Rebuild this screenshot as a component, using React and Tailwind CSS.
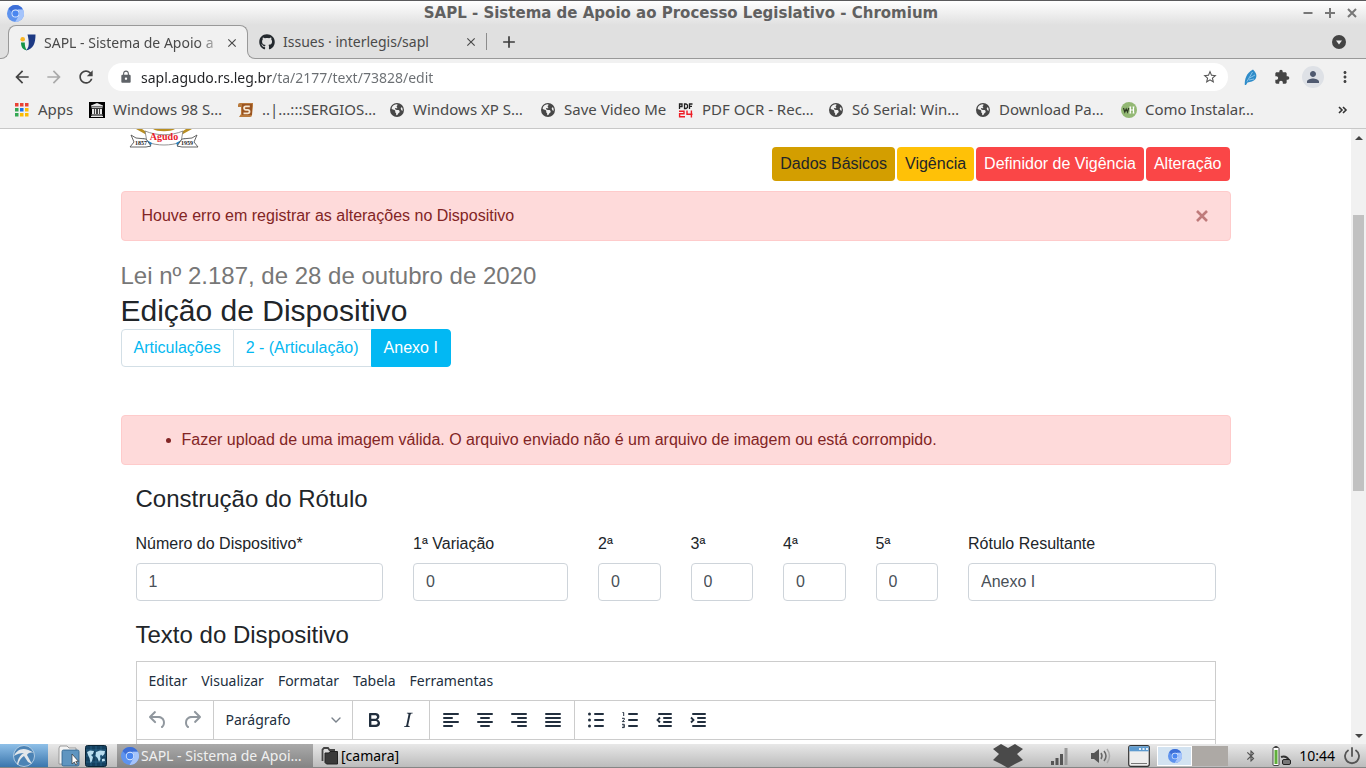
import React from "react";
import {
  MdArrowBack,
  MdArrowForward,
  MdRefresh,
  MdLock,
  MdStarOutline,
  MdExtension,
  MdPerson,
  MdMoreVert,
  MdClose,
  MdAdd,
  MdBluetooth,
} from "react-icons/md";
import { FaGithub, FaEarthAmericas } from "react-icons/fa6";

function ChromiumLogo({ className }) {
  return (
    <svg viewBox="0 0 24 24" className={className} aria-hidden="true">
      <circle cx="12" cy="12" r="12" fill="#5e93ee" />
      <path d="M12 0a12 12 0 0 1 10.6 6.4H12A5.6 5.6 0 0 0 6.7 10L2 5.4A12 12 0 0 1 12 0z" fill="#3d6fd8" />
      <path d="M22.6 6.4A12 12 0 0 1 11.4 24l5-8.6A5.6 5.6 0 0 0 15.5 7.5V6.4z" fill="#a5c4fb" />
      <circle cx="12" cy="12" r="5.6" fill="#dce8fd" />
      <circle cx="12" cy="12" r="4.4" fill="#4a86f0" />
    </svg>
  );
}

function SaplLogo() {
  return (
    <svg viewBox="0 0 16 17" className="h-[17px] w-4 shrink-0" aria-hidden="true">
      <circle cx="2.7" cy="5.2" r="2.3" fill="#f9b521" />
      <path d="M7.5 0.500H15.500C15.500 9 13.500 15 6 16.500 8.500 14 9 11 8.700 7.500 8.500 4.500 8 2.500 7.500.5z" fill="#1d3a84" />
      <path d="M1 8.500h3.800c0 3 .4 5.500 2 7.800C2.800 15.800 1 13 1 8.500z" fill="#159447" />
    </svg>
  );
}

function AppsIcon() {
  const colors = ["#ea4335", "#ea4335", "#ea4335", "#34a853", "#1a73e8", "#fbbc04", "#34a853", "#fbbc04", "#fbbc04"];
  return (
    <svg viewBox="0 0 14 14" className="size-[14px] shrink-0" aria-hidden="true">
      {colors.map((c, i) => (
        <rect key={i} x={(i % 3) * 5} y={Math.floor(i / 3) * 5} width="3.5" height="3.5" fill={c} />
      ))}
    </svg>
  );
}

function ArchiveIcon() {
  return (
    <svg viewBox="0 0 16 16" className="size-4 shrink-0" aria-hidden="true">
      <rect width="16" height="16" fill="#000" />
      <path d="M8 1l6 2.500v1H2v-1zM2.500 5.200h11v1h-11zM3 7h2v5H3zm2.700 0h1.600v5H5.700zm3 0h1.600v5H8.700zM11 7h2v5h-2zM2.500 12.600h11v.9h-11zM2 14h12v1H2z" fill="#e8e8e8" />
    </svg>
  );
}

function ScrollIcon() {
  return (
    <svg viewBox="0 0 16 16" className="size-4 shrink-0" aria-hidden="true">
      <path d="M0 3a2 2 0 0 1 2-2h13v3l-1 9a2 2 0 0 1-2 2H1l2-3V5H0z" fill="#b97a3c" />
      <path d="M4 2h10v11H4z" fill="#9a5420" />
      <path d="M11.800 4.300H7.800a1.700 1.700 0 0 0 0 3.500h2a1.700 1.700 0 0 1 0 3.500H5.500" fill="none" stroke="#f5e6d0" strokeWidth="1.800" />
    </svg>
  );
}

function GlobeIcon() {
  return <FaEarthAmericas className="ml-px size-[14px] shrink-0 text-[#474747]" aria-hidden="true" />;
}

function PdfIcon() {
  return (
    <svg viewBox="0 0 16 16" className="size-4 shrink-0" aria-hidden="true">
      <path d="M1.500 7V2H4v2.500H1.500M6.500 2h1.500l1.500 1v2.500l-1.500 1H6.500zM11.500 7V2h3M11.500 4.300h2.500" fill="none" stroke="#222" strokeWidth="1.300" />
      <path d="M1 9.300h5v2.500H1.600v2.900H7M9 8.500v3.700h5.500M13.400 8.500v7" fill="none" stroke="#ee1c25" strokeWidth="1.400" />
    </svg>
  );
}

function WikiHowIcon() {
  return (
    <svg viewBox="0 0 16 16" className="size-4 shrink-0" aria-hidden="true">
      <circle cx="8" cy="8" r="8" fill="#93b874" />
      <path d="M2.500 6l1.300 4L5.200 7l1.300 3L7.700 6" fill="none" stroke="#2c3a22" strokeWidth="1.200" />
      <path d="M9.300 5v6M12.500 5v6M9.300 8h3.200M8.400 5h1.800M8.400 11h1.800M11.600 5h1.800M11.600 11h1.800" fill="none" stroke="#fff" strokeWidth="1.200" />
    </svg>
  );
}

const bookmarks = [
  { icon: <ArchiveIcon />, label: "Windows 98 S…", width: "w-[149px]" },
  { icon: <ScrollIcon />, label: "..|...:::SERGIOS…", width: "w-[151px]" },
  { icon: <GlobeIcon />, label: "Windows XP S…", width: "w-[151px]" },
  { icon: <GlobeIcon />, label: "Save Video Me", width: "w-[138px]" },
  { icon: <PdfIcon />, label: "PDF OCR - Rec…", width: "w-[150px]" },
  { icon: <GlobeIcon />, label: "Só Serial: Win…", width: "w-[147px]" },
  { icon: <GlobeIcon />, label: "Download Pa…", width: "w-[146px]" },
  { icon: <WikiHowIcon />, label: "Como Instalar…", width: "w-[150px]" },
];

function TitleBar() {
  return (
    <header className="flex h-[25px] shrink-0 items-center border-t border-[#5a5a5c] bg-linear-to-b from-white to-[#e0e0e0] px-2">
      <ChromiumLogo className="-ml-px size-[17px]" />
      <h1 className="flex-1 pl-9 text-center font-['DejaVu_Sans',sans-serif] text-[15px] font-bold text-[#606060]">
        SAPL - Sistema de Apoio ao Processo Legislativo - Chromium
      </h1>
      <div className="flex items-center gap-[10px] text-[#777]">
        <button aria-label="Minimizar" className="flex size-3 items-center justify-center">
          <svg viewBox="0 0 12 12" className="size-3"><path d="M1.500 6h9" stroke="currentColor" strokeWidth="2" /></svg>
        </button>
        <button aria-label="Maximizar" className="flex size-3 items-center justify-center">
          <svg viewBox="0 0 12 12" className="size-3"><path d="M1 6h10M6 1v10" stroke="currentColor" strokeWidth="2" /></svg>
        </button>
        <button aria-label="Fechar janela" className="flex size-3 items-center justify-center">
          <svg viewBox="0 0 12 12" className="size-3"><path d="M2 2l8 8M10 2l-8 8" stroke="currentColor" strokeWidth="2" /></svg>
        </button>
      </div>
    </header>
  );
}

function TabStrip() {
  return (
    <nav aria-label="Abas" className="flex h-[34px] shrink-0 border-b border-[#999] bg-[#e0e0e0] pl-2 text-[14px] text-[#4a4a4a]">
      <div className="relative z-10 -mb-px flex w-[240px] items-center rounded-t-lg border border-b-0 border-[#999] bg-[#f1f1f1] pr-2 pl-[11px]">
        <span className="absolute bottom-0 -left-[9px] size-[9px] bg-[#f1f1f1]">
          <span className="block size-full rounded-br-lg border-r border-b border-[#999] bg-[#e0e0e0]" />
        </span>
        <span className="absolute -right-[9px] bottom-0 size-[9px] bg-[#f1f1f1]">
          <span className="block size-full rounded-bl-lg border-b border-l border-[#999] bg-[#e0e0e0]" />
        </span>
        <SaplLogo />
        <button className="ml-2 flex-1 mask-r-from-85% text-left whitespace-nowrap">SAPL - Sistema de Apoio a</button>
        <button aria-label="Fechar aba"><MdClose className="size-[14px]" /></button>
      </div>
      <div className="my-2 flex w-[239px] items-center border-r border-[#8c8c8c] pr-2 pl-[11px]">
        <FaGithub className="size-4 text-[#24292e]" />
        <button className="ml-2 flex-1 text-left whitespace-nowrap">Issues · interlegis/sapl</button>
        <button aria-label="Fechar aba"><MdClose className="size-[14px]" /></button>
      </div>
      <button aria-label="Nova aba" className="ml-3"><MdAdd className="size-5 text-[#3c3c3c]" /></button>
      <button aria-label="Pesquisar abas" className="mr-5 ml-auto">
        <svg viewBox="0 0 14 14" className="size-[14px]">
          <circle cx="7" cy="7" r="7" fill="#444" />
          <path d="M4 5.500h6L7 9.500z" fill="#eee" />
        </svg>
      </button>
    </nav>
  );
}

function Toolbar() {
  return (
    <div className="flex h-9 shrink-0 items-center bg-[#f1f1f1] px-3 text-[#444]">
      <button aria-label="Voltar"><MdArrowBack className="size-5" /></button>
      <button aria-label="Avançar" className="ml-3 text-[#aaa]"><MdArrowForward className="size-5" /></button>
      <button aria-label="Recarregar" className="ml-3"><MdRefresh className="size-5" /></button>
      <label className="ml-3 flex h-7 flex-1 items-center rounded-full bg-white pr-[10px] pl-[11px]">
        <MdLock className="size-[14px] text-[#5f6368]" aria-hidden="true" />
        <input
          aria-label="Endereço"
          defaultValue="sapl.agudo.rs.leg.br/ta/2177/text/73828/edit"
          className="ml-2 flex-1 bg-[linear-gradient(to_right,#202124_131px,#6a6e72_131px)] bg-clip-text text-[14px] text-transparent outline-none"
        />
        <MdStarOutline className="size-4 text-[#555]" aria-hidden="true" />
      </label>
      <button aria-label="Extensão" className="ml-4">
        <svg viewBox="0 0 14 16" className="h-4 w-[14px]">
          <path d="M9 .5c3 3 4.500 6 2.500 9.500-2 2.500-5 3-8 3.500L2 16H.8C.5 11 2 4 9 .5z" fill="#2f8cc9" />
          <path d="M8.500 3L3 12.500M11 6L5.500 9M10 10l-5 1" stroke="#9fd0f0" strokeWidth=".8" fill="none" />
        </svg>
      </button>
      <button aria-label="Extensões" className="ml-4"><MdExtension className="size-4" /></button>
      <button aria-label="Perfil" className="ml-3 flex size-[22px] items-center justify-center rounded-full bg-[#dee1e6] text-[#505a70]">
        <MdPerson className="size-[18px]" />
      </button>
      <button aria-label="Menu" className="ml-3"><MdMoreVert className="size-[18px]" /></button>
    </div>
  );
}

function BookmarksBar() {
  return (
    <nav aria-label="Favoritos" className="flex h-[34px] shrink-0 items-center border-b border-[#c8c8c8] bg-[#f1f1f1] pr-[18px] pb-1 pl-[15px] text-[15px] whitespace-nowrap text-[#4a4a4a]">
      <a href="#apps" className="flex w-[74px] items-center gap-[9px]">
        <AppsIcon />
        Apps
      </a>
      {bookmarks.map((b) => (
        <a key={b.label} href="#favorito" className={`flex shrink-0 items-center ${b.width}`}>
          <span className="flex w-6 shrink-0">{b.icon}</span>
          {b.label}
        </a>
      ))}
      <button aria-label="Mais favoritos" className="ml-auto">
        <svg viewBox="0 0 10 8" className="h-2 w-[10px]"><path d="M1 1l3 3-3 3M5 1l3 3-3 3" fill="none" stroke="#333" strokeWidth="1.6" /></svg>
      </button>
    </nav>
  );
}

function Crest() {
  return (
    <svg viewBox="0 0 70 19" className="ml-2 h-[19px] w-[70px]" role="img" aria-label="Brasão de Agudo">
      <path d="M7 0h6l6 4-3 1zM63 0h-6l-6 4 3 1z" fill="#b98f22" />
      <path d="M24 0h22c-4 3-18 3-22 0z" fill="#b98f22" />
      <path d="M16 2c12 5 26 5 38 0l-2 11c-10 4-24 4-34 0z" fill="#fff" stroke="#777" strokeWidth=".8" />
      <path d="M14 9l9 5-2 4-8-5zM56 9l-9 5 2 4 8-5z" fill="#2382c4" />
      <path d="M2 6l5 3 10 1 5 7-5 1H1l4-5zM68 6l-5 3-10 1-5 7 5 1h16l-4-5z" fill="#fff" stroke="#555" strokeWidth=".9" />
      <text x="35" y="11" textAnchor="middle" fontFamily="Liberation Serif, serif" fontWeight="bold" fontSize="10" fill="#e8202a">Agudo</text>
      <text x="12" y="16" textAnchor="middle" fontFamily="Liberation Serif, serif" fontWeight="bold" fontSize="6" fill="#222">1857</text>
      <text x="58" y="16" textAnchor="middle" fontFamily="Liberation Serif, serif" fontWeight="bold" fontSize="6" fill="#222">1959</text>
    </svg>
  );
}

const fields = [
  { id: "numero", label: "Número do Dispositivo*", value: "1", span: "col-span-3" },
  { id: "var1", label: "1ª Variação", value: "0", span: "col-span-2" },
  { id: "var2", label: "2ª", value: "0", span: "col-span-1" },
  { id: "var3", label: "3ª", value: "0", span: "col-span-1" },
  { id: "var4", label: "4ª", value: "0", span: "col-span-1" },
  { id: "var5", label: "5ª", value: "0", span: "col-span-1" },
  { id: "rotulo", label: "Rótulo Resultante", value: "Anexo I", span: "col-span-3" },
];

const toolPaths = {
  undo: "M6.4 8H12c3.7 0 6.2 2 6.8 5.1.6 2.7-.4 5.6-2.3 6.8a1 1 0 01-1-1.8c1.1-.6 1.8-2.7 1.4-4.6-.5-2.1-2.1-3.5-4.9-3.5H6.4l3.3 3.3a1 1 0 11-1.4 1.4l-5-5a1 1 0 010-1.4l5-5a1 1 0 011.4 1.4L6.4 8z",
  redo: "M17.6 10H12c-2.8 0-4.4 1.4-4.9 3.5-.4 2 .3 4 1.4 4.6a1 1 0 11-1 1.8c-2-1.2-2.9-4.1-2.3-6.8.6-3 3-5.1 6.8-5.1h5.6l-3.3-3.3a1 1 0 111.4-1.4l5 5a1 1 0 010 1.4l-5 5a1 1 0 01-1.4-1.4l3.3-3.3z",
  bold: "M7.8 19c-.3 0-.5 0-.6-.2l-.2-.5V5.700c0-.2 0-.4.2-.5l.6-.2h5c1.500 0 2.700.3 3.500 1 .7.6 1.100 1.400 1.100 2.500a3 3 0 01-.6 1.900c-.4.6-1 1-1.600 1.200.4.1.9.3 1.300.6s.8.7 1 1.200c.4.4.5 1 .5 1.600 0 1.300-.4 2.300-1.300 3-.8.7-2.100 1-3.800 1H7.800zm5-8.300c.6 0 1.200-.1 1.600-.5.4-.3.6-.7.6-1.300 0-1.100-.8-1.700-2.300-1.700H9.300v3.500h3.400zm.5 6c.7 0 1.300-.1 1.700-.4.4-.4.6-.9.6-1.500s-.2-1-.7-1.400c-.4-.3-1-.4-2-.4H9.400v3.800h4z",
  italic: "M16.700 4.700l-.1.9h-.3c-.6 0-1 0-1.400.3-.3.3-.4.6-.5 1.100l-2.100 9.800v.6c0 .5.4.8 1.400.8h.2l-.2.8H8l.2-.8h.2c1.100 0 1.800-.5 2-1.500l2-9.800.1-.5c0-.6-.4-.8-1.400-.8h-.3l.2-.9h5.800z",
};

const linePaths = {
  left: "M5 6h14M5 10h8M5 14h14M5 18h8",
  center: "M5 6h14M8 10h8M5 14h14M8 18h8",
  right: "M5 6h14M11 10h8M5 14h14M11 18h8",
  justify: "M5 6h14M5 10h14M5 14h14M5 18h14",
  bullets: "M11 6h8M11 12h8M11 18h8",
  outdent: "M7 6h12M12 10h7M12 14h7M7 18h12",
  indent: "M7 6h12M12 10h7M12 14h7M7 18h12",
  numbers: "M11 6h8M11 12h8M11 18h8",
};

const extraPaths = {
  outdent: "M8 9.500L5.500 12 8 14.500",
  indent: "M5 9.500L7.500 12 5 14.500",
  numbers: "M4.500 4.500h1.200V8M4 10.300h2.300v1.200L4.300 13.600h2.400M4 16.300h2.300v3.300H4M4.500 18h1.800",
};

function ToolButton({ name, label, muted }) {
  return (
    <button aria-label={label} className={`flex h-[34px] w-[34px] items-center justify-center ${muted ? "text-[#222f3e]/50" : "text-[#222f3e]"}`}>
      <svg viewBox="0 0 24 24" className="size-6">
        {toolPaths[name] && <path d={toolPaths[name]} fill="currentColor" fillRule="evenodd" />}
        {linePaths[name] && <path d={linePaths[name]} fill="none" stroke="currentColor" strokeWidth="2" strokeLinecap="round" />}
        {extraPaths[name] && <path d={extraPaths[name]} fill="none" stroke="currentColor" strokeWidth={name === "numbers" ? "1" : "1.8"} />}
        {name === "bullets" && [6, 12, 18].map((y) => <circle key={y} cx="5.5" cy={y} r="1.5" fill="currentColor" />)}
      </svg>
    </button>
  );
}

function ToolGroup({ children }) {
  return <div className="flex items-center border-r border-[#ccc] px-1 last:border-r-0">{children}</div>;
}

function Editor() {
  return (
    <div className="mt-3 min-h-[200px] border border-[#ccc] font-['Noto_Sans',sans-serif] text-[14px] text-[#222f3e]">
      <div className="flex h-[39px] items-center gap-[14px] border-b border-[#ccc] px-3">
        {["Editar", "Visualizar", "Formatar", "Tabela", "Ferramentas"].map((m) => (
          <button key={m}>{m}</button>
        ))}
      </div>
      <div className="flex h-[39px] border-b border-[#ccc]">
        <ToolGroup>
          <ToolButton name="undo" label="Desfazer" muted />
          <ToolButton name="redo" label="Refazer" muted />
        </ToolGroup>
        <ToolGroup>
          <div className="relative flex w-[130px] items-center">
            <select aria-label="Formato" className="h-[34px] w-full appearance-none bg-transparent px-2 outline-none">
              <option>Parágrafo</option>
            </select>
            <svg viewBox="0 0 10 10" className="pointer-events-none absolute right-[7px] size-[10px]">
              <path d="M1 3l4 4 4-4" fill="none" stroke="#222f3e" strokeOpacity=".6" strokeWidth="1.4" strokeLinecap="round" />
            </svg>
          </div>
        </ToolGroup>
        <ToolGroup>
          <ToolButton name="bold" label="Negrito" />
          <ToolButton name="italic" label="Itálico" />
        </ToolGroup>
        <ToolGroup>
          <ToolButton name="left" label="Alinhar à esquerda" />
          <ToolButton name="center" label="Centralizar" />
          <ToolButton name="right" label="Alinhar à direita" />
          <ToolButton name="justify" label="Justificar" />
        </ToolGroup>
        <ToolGroup>
          <ToolButton name="bullets" label="Lista com marcadores" />
          <ToolButton name="numbers" label="Lista numerada" />
          <ToolButton name="outdent" label="Diminuir recuo" />
          <ToolButton name="indent" label="Aumentar recuo" />
        </ToolGroup>
      </div>
    </div>
  );
}

function Page() {
  const pill = "h-[34px] rounded px-2 leading-[34px]";
  return (
    <main className="min-w-0 flex-1 overflow-hidden bg-white font-['Liberation_Sans',Arial,sans-serif] text-[16px] leading-6 text-[#212529]">
      <div className="mx-auto max-w-[1110px]">
        <div className="flex items-start justify-between pr-px pb-[10px]">
          <Crest />
          <nav aria-label="Seções" className="mt-[18px] flex gap-[2px]">
            <a href="#dados" className={`${pill} bg-[#d39e00]`}>Dados Básicos</a>
            <a href="#vigencia" className={`${pill} bg-[#ffc107]`}>Vigência</a>
            <a href="#definidor" className={`${pill} bg-[#fa4647] text-white`}>Definidor de Vigência</a>
            <a href="#alteracao" className={`${pill} bg-[#fa4647] text-white`}>Alteração</a>
          </nav>
        </div>
        <div role="alert" className="flex items-center justify-between rounded border border-[#fecbcb] bg-[#fedada] px-5 py-3 text-[#822525]">
          Houve erro em registrar as alterações no Dispositivo
          <button aria-label="Fechar" className="flex size-4 items-center justify-center">
            <svg viewBox="0 0 12 12" className="size-3"><path d="M1 1l10 10M11 1L1 11" stroke="#bf7b7b" strokeWidth="2.6" /></svg>
          </button>
        </div>
        <h2 className="mt-5 text-[30px] leading-9">
          <small className="mb-[2px] block text-[24px] leading-[30px] text-[#777]">Lei nº 2.187, de 28 de outubro de 2020</small>
          Edição de Dispositivo
        </h2>
        <nav aria-label="Articulações" className="flex text-[#03b8f1]">
          <a href="#articulacoes" className="rounded-l border border-[#d3dfe6] px-3 py-[6px]">Articulações</a>
          <a href="#articulacao-2" className="border-y border-[#d3dfe6] px-3 py-[6px]">2 - (Articulação)</a>
          <a href="#anexo" className="rounded-r border border-[#02b8f3] bg-[#02b8f3] px-3 py-[6px] text-white">Anexo I</a>
        </nav>
        <div role="alert" className="mt-12 rounded border border-[#fecbcb] bg-[#fedada] px-5 py-3 text-[#822525]">
          <ul className="list-disc pl-10">
            <li>Fazer upload de uma imagem válida. O arquivo enviado não é um arquivo de imagem ou está corrompido.</li>
          </ul>
        </div>
        <form className="mt-[19px]" onSubmit={(e) => e.preventDefault()}>
          <h3 className="px-[15px] text-[24px] leading-[29px]">Construção do Rótulo</h3>
          <div className="mt-[19px] grid grid-cols-12">
            {fields.map((f) => (
              <div key={f.id} className={`px-[15px] ${f.span}`}>
                <label htmlFor={f.id} className="mb-[7px] block whitespace-nowrap">{f.label}</label>
                <input id={f.id} defaultValue={f.value} className="h-[38px] w-full rounded border border-[#ced4da] px-3 text-[#495057]" />
              </div>
            ))}
          </div>
          <div className="mt-[19px] px-[15px]">
            <h3 className="text-[24px] leading-[29px]">Texto do Dispositivo</h3>
            <Editor />
          </div>
        </form>
      </div>
    </main>
  );
}

function Scrollbar() {
  return (
    <div className="flex w-[15px] shrink-0 flex-col bg-[#f1f1f1]" aria-hidden="true">
      <span className="flex h-[17px] items-center justify-center">
        <svg viewBox="0 0 8 4" className="h-1 w-2"><path d="M0 4l4-4 4 4z" fill="#444" /></svg>
      </span>
      <span className="flex-[69]" />
      <span className="mx-[2px] flex-[276] bg-[#c1c1c1]" />
      <span className="flex-[236]" />
      <span className="flex h-[17px] items-center justify-center">
        <svg viewBox="0 0 8 4" className="h-1 w-2"><path d="M0 0l4 4 4-4z" fill="#444" /></svg>
      </span>
    </div>
  );
}

function Taskbar() {
  return (
    <footer className="flex h-6 shrink-0 items-center border-b border-[#858585] bg-linear-to-b from-[#e8e8e8] to-[#bcbcbc] pr-[5px] text-[14px] text-black">
      <button aria-label="Menu iniciar" className="flex h-full w-12 items-center justify-center bg-linear-to-b from-[#8fc0e8] to-[#3a76ad]">
        <svg viewBox="0 0 22 22" className="size-[22px]">
          <circle cx="11" cy="11" r="10.5" fill="#4c83b5" stroke="#c4d9ea" strokeWidth=".8" />
          <path d="M1 11C4 4 11 1 21 8c-4-1-6 0-7 2l5 9-4-2-4-6c-3 2-5 5-6 9l-1-1c1-5 3-9 7-11-4 0-7 1-10 3z" fill="#e3e7ea" />
        </svg>
      </button>
      <button aria-label="Arquivos" className="ml-[10px]">
        <svg viewBox="0 0 22 22" className="size-[22px]">
          <path d="M1 3l1-2h7l2 2h7v16H1z" fill="#f4f4f4" stroke="#888" strokeWidth=".8" />
          <rect x="4" y="5" width="17" height="16" rx="1.5" fill="#5f95c0" stroke="#2c5f8a" strokeWidth=".8" />
          <path d="M14 9v10l2.300-2 1.500 3 1.500-.8-1.500-2.800h2.700z" fill="#fff" stroke="#333" strokeWidth=".7" />
        </svg>
      </button>
      <button aria-label="Navegador" className="ml-[5px]">
        <svg viewBox="0 0 22 22" className="size-[22px]">
          <rect x=".5" y=".5" width="21" height="21" rx="2" fill="#14405f" stroke="#0b2537" />
          <path d="M1 5h20M1 11h20M1 17h20M6 1v20M11 1v20M16 1v20" stroke="#2f6f97" strokeWidth=".6" />
          <path d="M2 7l3-1.500 4 .5-1 3-2 1 2 2-1 4-1.500 2-1-5L3 10zM11 7l4-1.500 5 .5-.5 3-2 2-1.500-1.500-1 1.500.5 3-1.500 3-1.500-4-2-2zM17 14l2.500-.5.5 2.500-3 .5z" fill="#b9def0" />
        </svg>
      </button>
      <button className="ml-[10px] flex h-full w-[196px] items-center gap-[2px] bg-linear-to-b from-[#aaa] to-[#858585] pl-1 whitespace-nowrap text-[#f0f0f0]">
        <ChromiumLogo className="size-[18px] shrink-0" />
        SAPL - Sistema de Apoi…
      </button>
      <button className="ml-2 flex items-center gap-[2px]">
        <svg viewBox="0 0 18 18" className="size-[18px]">
          <path d="M1.500 14V2.500L3 1h4l1.500 2H14" fill="none" stroke="#444" strokeWidth="1.800" />
          <path d="M4 6h4l1-1.500h7.500V17H5.500L4 15.500z" fill="#3a3a3a" stroke="#222" strokeLinejoin="round" />
        </svg>
        [camara]
      </button>
      <div className="ml-auto flex items-center">
        <svg viewBox="0 0 30 24" className="h-6 w-[30px]" role="img" aria-label="Dropbox">
          <path d="M8 0l7 4 7-4 8 5-6 5 6 6-8 4-7 4-7-4-8-4 6-6-6-5z" fill="#4a4a4a" />
        </svg>
        <svg viewBox="0 0 18 18" className="ml-7 size-[18px]" role="img" aria-label="Rede">
          <path d="M0 14h3v4H0zM4.500 11h3v7h-3zM9 7h3v11H9z" fill="#555" />
          <path d="M13.500 1h3v17h-3z" fill="#999" />
        </svg>
        <svg viewBox="0 0 20 16" className="ml-[22px] h-4 w-5" role="img" aria-label="Volume">
          <path d="M0 5h3l5-4v14l-5-4H0z" fill="#555" />
          <path d="M10 5q2 3 0 6M13 3q4 5 0 10" fill="none" stroke="#666" strokeWidth="1.5" />
          <path d="M16 1q5 7 0 14" fill="none" stroke="#aaa" strokeWidth="1.5" />
        </svg>
        <svg viewBox="0 0 22 22" className="ml-[17px] size-[22px]" role="img" aria-label="Janelas">
          <rect x=".7" y=".7" width="20.6" height="20.6" rx="2" fill="#eee" stroke="#333" strokeWidth="1.2" />
          <path d="M1.300 1.300h19.400v5H1.300z" fill="#5d9bd0" />
          <path d="M11 3h2v2h-2zm3.500 0h2v2h-2zm3.500 0h2v2h-2z" fill="#e4f0fa" />
          <path d="M3 18.500h16" stroke="#777" />
        </svg>
        <div className="ml-[7px] flex">
          <span className="flex h-5 w-[35px] items-center justify-center border border-white bg-[#d3e3f1]"><ChromiumLogo className="size-[14px]" /></span>
          <span className="h-5 w-9 bg-[#ada9a5]" />
        </div>
        <MdBluetooth className="ml-4 size-[14px] text-[#555]" aria-label="Bluetooth" />
        <svg viewBox="0 0 20 20" className="ml-[14px] size-5" role="img" aria-label="Bateria">
          <rect x="1" y="1.5" width="6" height="18" rx="1" fill="#fff" stroke="#444" />
          <rect x="2.5" y="4" width="3" height="14" fill="#5fae3a" />
          <path d="M2.500 0h3v1.500h-3z" fill="#444" />
          <path d="M9 11q5-2 8 3" fill="none" stroke="#333" strokeWidth="2" />
          <rect x="10.5" y="13.5" width="8" height="5" rx="1.5" fill="#777" stroke="#222" />
        </svg>
        <time className="ml-[7px]">10:44</time>
        <button aria-label="Desligar" className="ml-2">
          <svg viewBox="0 0 18 18" className="size-[18px]">
            <path d="M5 3.500a7 7 0 1 0 8 0M9 1v8" fill="none" stroke="#555" strokeWidth="1.8" strokeLinecap="round" />
          </svg>
        </button>
      </div>
    </footer>
  );
}

export default function App() {
  return (
    <div className="flex h-screen flex-col overflow-hidden font-['Noto_Sans',sans-serif]">
      <TitleBar />
      <TabStrip />
      <Toolbar />
      <BookmarksBar />
      <div className="flex min-h-0 flex-1">
        <Page />
        <Scrollbar />
      </div>
      <Taskbar />
    </div>
  );
}
